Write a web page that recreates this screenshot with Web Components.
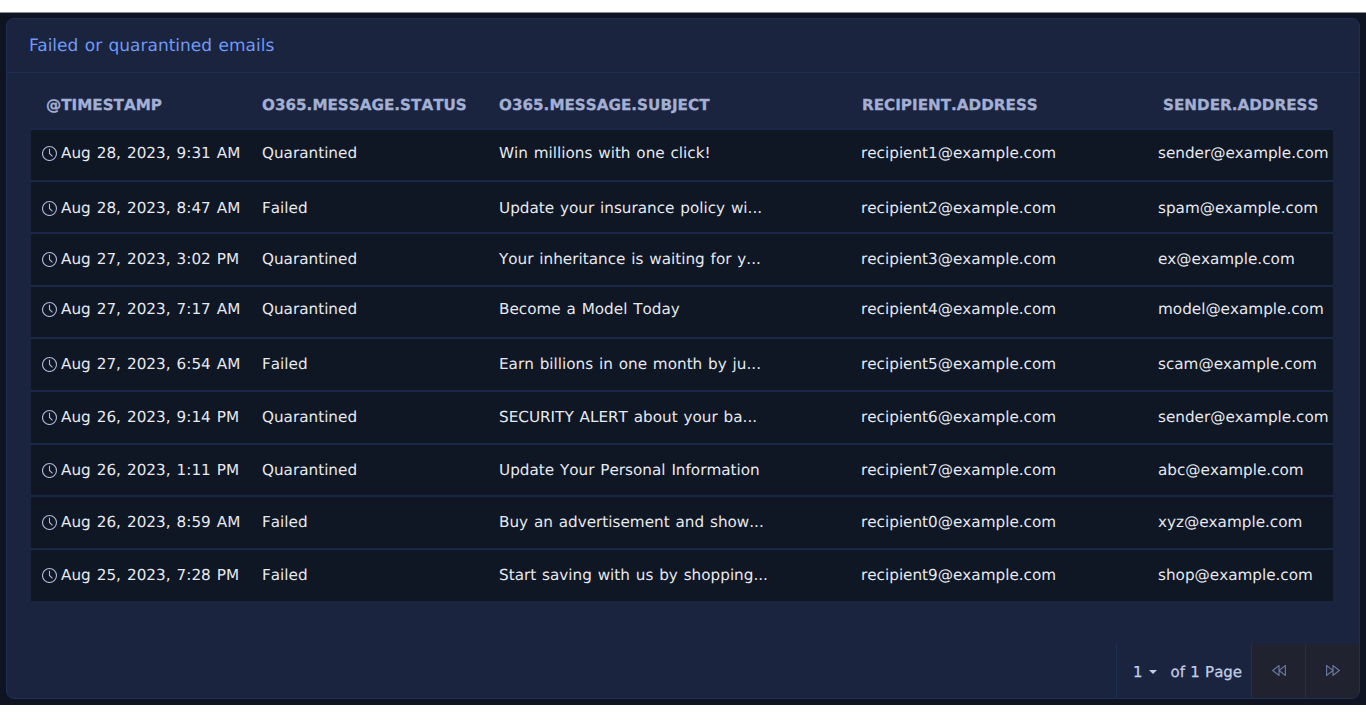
<!doctype html>
<html>
<head>
<meta charset="utf-8">
<style>
  html, body { margin: 0; background: #fff; }
  body { font-family: "DejaVu Sans", sans-serif; height: 720px; overflow: hidden;
         font-kerning: none; text-rendering: geometricPrecision; }
</style>
</head>
<body>
<email-panel heading="Failed or quarantined emails">
  <email-row head time="@TIMESTAMP" status="O365.MESSAGE.STATUS" subject="O365.MESSAGE.SUBJECT" recipient="RECIPIENT.ADDRESS" sender="SENDER.ADDRESS"></email-row>
  <email-row h="52" lift="5" time="Aug 28, 2023, 9:31 AM" status="Quarantined" subject="Win millions with one click!" recipient="recipient1@example.com" sender="sender@example.com"></email-row>
  <email-row h="52" drop="2" time="Aug 28, 2023, 8:47 AM" status="Failed" subject="Update your insurance policy wi..." recipient="recipient2@example.com" sender="spam@example.com"></email-row>
  <email-row h="53" lift="1" time="Aug 27, 2023, 3:02 PM" status="Quarantined" subject="Your inheritance is waiting for y..." recipient="recipient3@example.com" sender="ex@example.com"></email-row>
  <email-row h="52" lift="7" time="Aug 27, 2023, 7:17 AM" status="Quarantined" subject="Become a Model Today" recipient="recipient4@example.com" sender="model@example.com"></email-row>
  <email-row h="53" lift="1" time="Aug 27, 2023, 6:54 AM" status="Failed" subject="Earn billions in one month by ju..." recipient="recipient5@example.com" sender="scam@example.com"></email-row>
  <email-row h="53" lift="1" time="Aug 26, 2023, 9:14 PM" status="Quarantined" subject="SECURITY ALERT about your ba..." recipient="recipient6@example.com" sender="sender@example.com"></email-row>
  <email-row h="52" lift="1" time="Aug 26, 2023, 1:11 PM" status="Quarantined" subject="Update Your Personal Information" recipient="recipient7@example.com" sender="abc@example.com"></email-row>
  <email-row h="53" lift="1" time="Aug 26, 2023, 8:59 AM" status="Failed" subject="Buy an advertisement and show..." recipient="recipient0@example.com" sender="xyz@example.com"></email-row>
  <email-row h="53" lift="1" time="Aug 25, 2023, 7:28 PM" status="Failed" subject="Start saving with us by shopping..." recipient="recipient9@example.com" sender="shop@example.com"></email-row>
  <page-nav slot="footer"></page-nav>
</email-panel>

<script>
// Card with a title bar, a table slot and a footer slot pinned to the bottom.
class EmailPanel extends HTMLElement {
  constructor() {
    super();
    this.attachShadow({ mode: "open" }).innerHTML = `
      <style>
        :host { display: block; margin-top: 12px; height: 693px; box-sizing: border-box;
                border-top: 1px solid #8a8d94; background: #0e1422; padding: 5px 6px 6px 6px; }
        .card { box-sizing: border-box; height: 100%; width: 1354px; display: flex; flex-direction: column;
                background: #1a243f; border: 1px solid #1f2e54; border-radius: 8px; }
        h2 { margin: 0; height: 54px; box-sizing: border-box; border-bottom: 1px solid #1f2e54;
             padding: 1px 0 0 22px; display: flex; align-items: center;
             font: 400 17px "DejaVu Sans", sans-serif; word-spacing: 1px; color: #709af5; }
        .rows { padding: 0 26px 0 24px; flex: 1; }
        .foot { display: flex; justify-content: flex-end; }
      </style>
      <div class="card">
        <h2></h2>
        <div class="rows"><slot></slot></div>
        <div class="foot"><slot name="footer"></slot></div>
      </div>`;
  }
  connectedCallback() {
    this.shadowRoot.querySelector("h2").textContent = this.getAttribute("heading");
  }
}

// One table line; "head" switches it to the column header look.
// lift / drop pad the cells so the text sits off-centre, as in the source table.
class EmailRow extends HTMLElement {
  constructor() {
    super();
    this.attachShadow({ mode: "open" }).innerHTML = `
      <style>
        :host { display: grid; box-sizing: border-box; height: var(--h, 52px);
                grid-template-columns: 231px 237px 362px 297px 175px; align-items: center;
                background: #0f1624; border-top: 2px solid #1b2747;
                font-size: 15.22px; word-spacing: 1px; color: #e6e9ef; white-space: nowrap; }
        :host([head]) { height: 55px; background: transparent; border-top: 0; font-weight: 700;
                        color: #a3afd3; font-size: 15.2px; word-spacing: 0; -webkit-text-stroke: .3px #a3afd3; }
        div { padding-top: var(--drop, 0); padding-bottom: var(--lift, 0); }
        .time { display: flex; align-items: center; padding-left: 11px; word-spacing: 1.2px; }
        svg { width: 16px; height: 16px; margin-right: 3px; flex: none; }
        :host([head]) svg { display: none; }
        :host([head]) .time { padding-left: 15px; }
        :host([head]) div { padding-bottom: 0; padding-top: 9px; }
        :host([head]) .rec { padding-left: 1px; }
        :host([head]) .snd { padding-left: 5px; }
      </style>
      <div class="time">
        <svg viewBox="0 0 16 16" fill="none" stroke="#aeb9d8" stroke-width="1.1">
          <circle cx="7.5" cy="8.5" r="7"/><path d="M7.5 3.8V8.5l3 2.8"/>
        </svg><span id="time"></span>
      </div>
      <div id="status"></div>
      <div id="subject"></div>
      <div id="recipient" class="rec"></div>
      <div id="sender" class="snd"></div>`;
  }
  connectedCallback() {
    for (const k of ["time", "status", "subject", "recipient", "sender"]) {
      this.shadowRoot.getElementById(k).textContent = this.getAttribute(k);
    }
    for (const k of ["h", "lift", "drop"]) {
      if (this.hasAttribute(k)) this.style.setProperty("--" + k, this.getAttribute(k) + "px");
    }
  }
}

class PageNav extends HTMLElement {
  constructor() {
    super();
    this.attachShadow({ mode: "open" }).innerHTML = `
      <style>
        :host { display: flex; height: 54px; align-items: stretch; border-left: 1px solid #1f2e54;
                color: #c3cde6; font-size: 15px; word-spacing: .5px; overflow: hidden; border-bottom-right-radius: 7px; }
        .info { display: flex; align-items: center; width: 134px; box-sizing: border-box; padding: 1px 0 0 16px; white-space: nowrap; -webkit-text-stroke: .25px #c3cde6; }
        .caret { width: 0; height: 0; border: 4px solid transparent; border-top-color: #c3cde6; border-bottom: 0; margin: 0 14px 0 6px; }
        button { width: 54px; margin-left: 0; padding: 0 0 2px; border: 0; border-left: 1px solid #2a2d3a; background: #20232f;
                 display: flex; align-items: center; justify-content: center; }
        svg { width: 14px; height: 11px; }
      </style>
      <div class="info">1<span class="caret"></span>of 1 Page</div>
      <button><svg viewBox="0 0 14 11" fill="none" stroke="#66739a" stroke-width="1.2"><path d="M7 .6v9.8L.8 5.5zM13.4 .6v9.8L7 5.5z"/></svg></button>
      <button><svg viewBox="0 0 14 11" fill="none" stroke="#66739a" stroke-width="1.2"><path d="M.6 .6v9.8L7 5.5zM7 .6v9.8l6.2-4.9z"/></svg></button>`;
  }
}

customElements.define("email-panel", EmailPanel);
customElements.define("email-row", EmailRow);
customElements.define("page-nav", PageNav);
</script>
</body>
</html>
